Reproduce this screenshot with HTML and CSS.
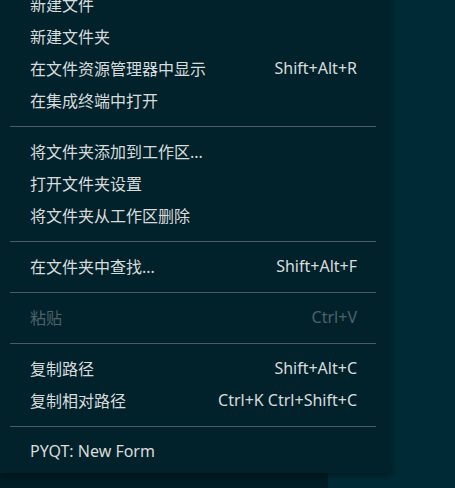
FILE: index.html
```html
<!DOCTYPE html>
<html lang="zh-CN">
<head>
<meta charset="utf-8">
<link rel="stylesheet" href="styles.css">
</head>
<body>
<div class="workbench">
  <div class="sidebar"></div>
  <div class="editor"></div>
</div>
<div class="menu">
  <div class="item"><span class="label">新建文件</span></div>
  <div class="item"><span class="label">新建文件夹</span></div>
  <div class="item"><span class="label">在文件资源管理器中显示</span><span class="key">Shift+Alt+R</span></div>
  <div class="item"><span class="label">在集成终端中打开</span></div>
  <div class="sep"></div>
  <div class="item"><span class="label">将文件夹添加到工作区...</span></div>
  <div class="item"><span class="label">打开文件夹设置</span></div>
  <div class="item"><span class="label">将文件夹从工作区删除</span></div>
  <div class="sep"></div>
  <div class="item"><span class="label">在文件夹中查找...</span><span class="key">Shift+Alt+F</span></div>
  <div class="sep"></div>
  <div class="item disabled"><span class="label">粘贴</span><span class="key">Ctrl+V</span></div>
  <div class="sep"></div>
  <div class="item"><span class="label">复制路径</span><span class="key">Shift+Alt+C</span></div>
  <div class="item"><span class="label">复制相对路径</span><span class="key">Ctrl+K Ctrl+Shift+C</span></div>
  <div class="sep"></div>
  <div class="item"><span class="label">PYQT: New Form</span></div>
</div>
</body>
</html>
```
FILE: styles.css
```css
html, body {
  margin: 0;
  padding: 0;
  height: 100%;
  overflow: hidden;
  background: #002b36;
}
body {
  font-family: "Noto Sans", "Noto Sans CJK SC", sans-serif;
  font-size: 16px;
  position: relative;
}
.workbench {
  display: flex;
  height: 100%;
}
.sidebar {
  width: 328px;
  background: #001c25;
}
.editor {
  flex: 1;
  background: #002b36;
}
.menu {
  position: absolute;
  left: 0;
  top: -12px;
  width: 391px;
  padding-bottom: 6px;
  background: #01212b;
  box-shadow: 0 2px 6px rgba(0, 0, 0, 0.45);
  color: #d9dcdc;
}
.item {
  height: 32px;
  display: flex;
  align-items: center;
  justify-content: space-between;
  padding: 0 34px 0 30px;
  white-space: nowrap;
}
.item.disabled {
  color: #4f6168;
}
.sep {
  height: 1px;
  margin: 10px 15px 8px 10px;
  background: #4d5c62;
}
```
